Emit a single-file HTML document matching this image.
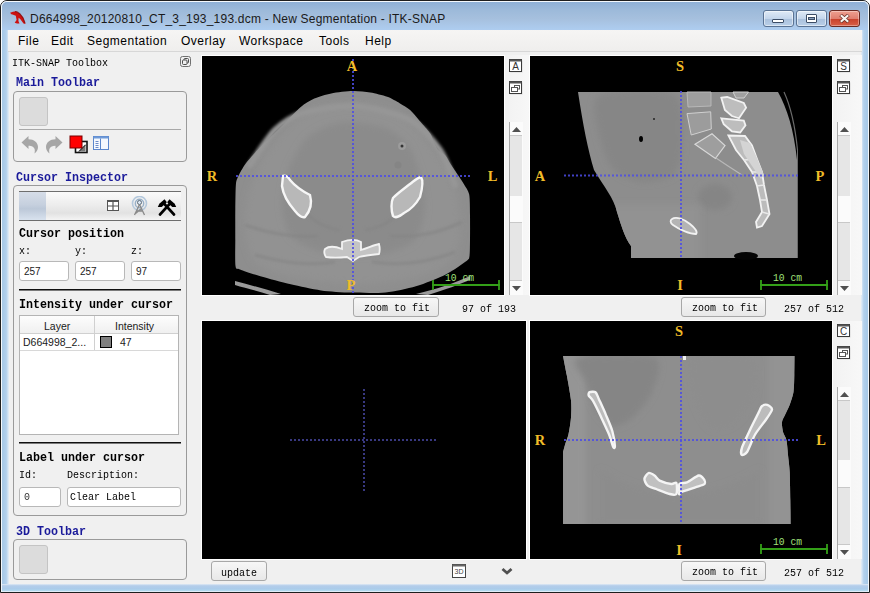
<!DOCTYPE html>
<html><head><meta charset="utf-8">
<style>
*{box-sizing:border-box;margin:0;padding:0}
html,body{width:870px;height:593px;overflow:hidden;background:#fff;position:relative;font-family:"Liberation Sans",sans-serif}
.a{position:absolute}
.t{position:absolute;white-space:nowrap;line-height:1}
.mono{font-family:"Liberation Mono",monospace;font-size:11px;transform-origin:0 0;transform:scaleX(0.9091)}
.bmono{font-family:"Liberation Mono",monospace;font-weight:bold;font-size:12px;transform-origin:0 0;transform:scaleX(0.9722)}
.blue{color:#1a1a9a}
.gb{position:absolute;border:1px solid #9a9a9a;border-radius:4px}
.sb{position:absolute;background:#fff;border:1px solid #b8b8b8;border-radius:3px}
.btn{position:absolute;border:1px solid #a8a8a8;border-radius:3px;background:linear-gradient(#f7f7f7,#e8e8e8)}
.view{position:absolute;background:#000;overflow:hidden}
.lab{position:absolute;color:#f0b020;font-family:"Liberation Serif",serif;font-weight:bold;font-size:13px;line-height:1}
</style></head><body>
<!-- window frame -->
<div class="a" style="left:0;top:0;width:870px;height:593px;border:1px solid #1e1e1e;border-radius:7px 7px 0 0;background:#b4cbe6"></div>
<div class="a" style="left:1px;top:1px;width:868px;height:591px;border:1px solid #f4f8fc;border-radius:6px 6px 0 0;border-bottom-color:#e0ecf8"></div>
<div class="a" style="left:2px;top:2px;width:866px;height:28px;border-radius:5px 5px 0 0;background:linear-gradient(#8fb0d6 0%,#9dbada 30%,#a6c0de 60%,#aecdf0 100%)"></div>
<div class="a" style="left:2px;top:30px;width:7px;height:554px;background:linear-gradient(90deg,#a6c8e6 0%,#b2d0ec 60%,#e6eef6 100%)"></div>
<div class="a" style="left:861px;top:30px;width:7px;height:554px;background:linear-gradient(270deg,#a6c8e6 0%,#b2d0ec 60%,#e6eef6 100%)"></div>
<div class="a" style="left:2px;top:584px;width:866px;height:7px;background:linear-gradient(#e0eaf4 0%,#b4cdea 25%,#aacbea 70%,#b4dcf0 100%)"></div>

<!-- title -->
<svg class="a" style="left:8px;top:9px" width="20" height="17" viewBox="8 9 20 17">
<path d="M10.1,12.8 L13,11.8 L16,11.2 L19.7,13.4 L23.1,17.2 L25.6,24 L23.5,23.5 L20.2,18.9 L18.6,17.8 L18.4,21 L19.5,23.6 L17,23.4 L14.7,22.7 L16.6,20 L15.8,15.8 L12.5,14.5 L11.3,14.3 Z" fill="#cc1111"/>
<path d="M15,11.6 L17.5,12 L20,14 L23,18 L25,23" stroke="#7a0a0a" stroke-width="1.2" fill="none" opacity=".7"/>
</svg>
<div class="t" style="left:30px;top:13px;font-size:12px;color:#1a1a1a;letter-spacing:0.21px">D664998_20120810_CT_3_193_193.dcm - New Segmentation - ITK-SNAP</div>

<!-- caption buttons -->
<div class="a" style="left:763px;top:10px;width:31px;height:17px;border:1px solid #5a7394;border-radius:3px;background:linear-gradient(#dfeaf6 0%,#c4d6ec 50%,#a9c0dc 51%,#b9cfe8 100%);box-shadow:inset 0 0 0 1px rgba(255,255,255,.5)"></div>
<div class="a" style="left:772px;top:19px;width:12px;height:4px;background:#fff;border:1px solid #3c4d66;border-radius:1px"></div>
<div class="a" style="left:796px;top:10px;width:31px;height:17px;border:1px solid #5a7394;border-radius:3px;background:linear-gradient(#dfeaf6 0%,#c4d6ec 50%,#a9c0dc 51%,#b9cfe8 100%);box-shadow:inset 0 0 0 1px rgba(255,255,255,.5)"></div>
<div class="a" style="left:806px;top:14px;width:11px;height:9px;background:#fff;border:1px solid #3c4d66;border-radius:1px"></div>
<div class="a" style="left:808px;top:17px;width:7px;height:3px;background:#8aa0bc;border:1px solid #3c4d66"></div>
<div class="a" style="left:829px;top:10px;width:31px;height:17px;border:1px solid #6a2a22;border-radius:3px;background:linear-gradient(#eea090 0%,#e08070 50%,#c8402a 51%,#d86048 100%);box-shadow:inset 0 0 0 1px rgba(255,255,255,.35)"></div>
<svg class="a" style="left:839px;top:14px" width="11" height="9" viewBox="0 0 11 9">
<path d="M1.5,1 L9.5,8 M9.5,1 L1.5,8" stroke="#6a3028" stroke-width="3.6" stroke-linecap="butt"/>
<path d="M1.8,1.2 L9.2,7.8 M9.2,1.2 L1.8,7.8" stroke="#f8f4f0" stroke-width="2.2"/>
</svg>

<!-- menubar -->
<div class="a" style="left:8px;top:30px;width:854px;height:22px;background:linear-gradient(#f6f5f4,#efeeed);border-bottom:1px solid #d7d7d7"></div>
<div class="t" style="left:18px;top:35px;font-size:12px;color:#000;letter-spacing:0.5px">File</div>
<div class="t" style="left:51px;top:35px;font-size:12px;color:#000;letter-spacing:0.5px">Edit</div>
<div class="t" style="left:87px;top:35px;font-size:12px;color:#000;letter-spacing:0.5px">Segmentation</div>
<div class="t" style="left:181px;top:35px;font-size:12px;color:#000;letter-spacing:0.5px">Overlay</div>
<div class="t" style="left:239px;top:35px;font-size:12px;color:#000;letter-spacing:0.5px">Workspace</div>
<div class="t" style="left:319px;top:35px;font-size:12px;color:#000;letter-spacing:0.5px">Tools</div>
<div class="t" style="left:365px;top:35px;font-size:12px;color:#000;letter-spacing:0.5px">Help</div>

<!-- content bg -->
<div class="a" style="left:9px;top:52px;width:852px;height:532px;background:#f0f0f0"></div>

<!-- LEFT PANEL -->
<div class="t mono" style="left:12px;top:58px;color:#000">ITK-SNAP Toolbox</div>
<svg class="a" style="left:180px;top:56px" width="11" height="11" viewBox="0 0 11 11">
<rect x="0.5" y="0.5" width="10" height="10" rx="2" fill="none" stroke="#707070"/>
<rect x="4" y="2.5" width="4.5" height="4.5" rx="1" fill="#f0f0f0" stroke="#505050"/>
<rect x="2.5" y="4" width="4.5" height="4.5" rx="1" fill="#f0f0f0" stroke="#505050"/>
</svg>
<div class="t bmono blue" style="left:16px;top:77px">Main Toolbar</div>
<div class="gb" style="left:13px;top:91px;width:174px;height:71px"></div>
<div class="a" style="left:19px;top:97px;width:29px;height:29px;border:1px solid #c4c4c4;border-radius:3px;background:#dcdcdc"></div>
<div class="a" style="left:19px;top:129px;width:162px;height:1px;background:#a8a8a8"></div>

<!-- CURSOR INSPECTOR -->
<div class="t bmono blue" style="left:16px;top:172px">Cursor Inspector</div>
<div class="gb" style="left:13px;top:185px;width:174px;height:331px"></div>
<div class="a" style="left:19px;top:191px;width:162px;height:30px;border-top:1px solid #6e6e6e;border-bottom:1px solid #6e6e6e;background:linear-gradient(#fafafa 0%,#ededed 45%,#e2e2e2 75%,#f4f4f4 100%)"></div>
<div class="a" style="left:19px;top:192px;width:27px;height:28px;background:linear-gradient(#d6dde8 0%,#c6d0de 45%,#bcc8d8 60%,#d8e2ee 100%)"></div>
<div class="t bmono" style="left:19px;top:228px;color:#000">Cursor position</div>
<div class="t mono" style="left:19px;top:246px;color:#000">x:</div>
<div class="t mono" style="left:75px;top:246px;color:#000">y:</div>
<div class="t mono" style="left:131px;top:246px;color:#000">z:</div>
<div class="sb" style="left:19px;top:261px;width:50px;height:20px"></div>
<div class="sb" style="left:75px;top:261px;width:50px;height:20px"></div>
<div class="sb" style="left:131px;top:261px;width:50px;height:20px"></div>
<div class="t" style="left:24px;top:267px;font-size:10px;color:#1a1a1a">257</div>
<div class="t" style="left:80px;top:267px;font-size:10px;color:#1a1a1a">257</div>
<div class="t" style="left:136px;top:267px;font-size:10px;color:#1a1a1a">97</div>
<div class="a" style="left:19px;top:289px;width:162px;height:2px;background:linear-gradient(#101010 50%,#7a7a7a 50%)"></div>
<div class="t bmono" style="left:19px;top:299px;color:#000">Intensity under cursor</div>
<!-- table -->
<div class="a" style="left:19px;top:315px;width:160px;height:120px;background:#fff;border:1px solid #b4b4b4"></div>
<div class="a" style="left:20px;top:316px;width:158px;height:18px;background:linear-gradient(#fdfdfd,#f0f0f0);border-bottom:1px solid #d0d0d0"></div>
<div class="a" style="left:94px;top:316px;width:1px;height:34px;background:#d0d0d0"></div>
<div class="a" style="left:20px;top:350px;width:158px;height:1px;background:#d8d8d8"></div>
<div class="t" style="left:44px;top:321px;font-size:10.5px;color:#1a1a1a">Layer</div>
<div class="t" style="left:115px;top:321px;font-size:10.5px;color:#1a1a1a">Intensity</div>
<div class="t" style="left:23px;top:337px;font-size:10.5px;color:#1a1a1a">D664998_2...</div>
<div class="a" style="left:100px;top:336px;width:12px;height:12px;border:1px solid #000;background:#808080"></div>
<div class="t" style="left:120px;top:337px;font-size:10.5px;color:#1a1a1a">47</div>
<div class="a" style="left:19px;top:442px;width:162px;height:2px;background:linear-gradient(#101010 50%,#7a7a7a 50%)"></div>
<div class="t bmono" style="left:19px;top:452px;color:#000">Label under cursor</div>
<div class="t mono" style="left:19px;top:470px;color:#000">Id:</div>
<div class="t mono" style="left:67px;top:470px;color:#000">Description:</div>
<div class="sb" style="left:19px;top:487px;width:42px;height:20px"></div>
<div class="sb" style="left:67px;top:487px;width:114px;height:20px"></div>
<div class="t mono" style="left:24px;top:492px;color:#333">0</div>
<div class="t mono" style="left:70px;top:492px;color:#000">Clear Label</div>

<!-- 3D TOOLBAR -->
<div class="t bmono blue" style="left:16px;top:526px">3D Toolbar</div>
<div class="gb" style="left:13px;top:539px;width:174px;height:41px"></div>
<div class="a" style="left:19px;top:545px;width:29px;height:29px;border:1px solid #c4c4c4;border-radius:3px;background:#dcdcdc"></div>

<!-- VIEWS -->
<div class="a" style="left:201px;top:55px;width:304px;height:241px;background:#fff"></div>
<div class="a" style="left:529px;top:55px;width:304px;height:241px;background:#fff"></div>
<div class="a" style="left:201px;top:320px;width:326px;height:240px;background:#fff"></div>
<div class="a" style="left:529px;top:320px;width:304px;height:240px;background:#fff"></div>

<svg width="0" height="0" style="position:absolute"><defs><filter id="soft" x="-20%" y="-20%" width="140%" height="140%"><feGaussianBlur stdDeviation="3"/></filter><filter id="bsoft" x="-20%" y="-20%" width="140%" height="140%"><feGaussianBlur stdDeviation="0.5"/></filter><filter id="msoft" x="-20%" y="-20%" width="140%" height="140%"><feGaussianBlur stdDeviation="1.5"/></filter></defs></svg>
<svg class="a" style="left:202px;top:56px" width="302" height="239" viewBox="202 56 302 239">
<rect x="202" y="56" width="302" height="239" fill="#000"/>
<path d="M235,281 C250,285 265,289 281,294 L270,295 C258,291 245,288 235,285 Z" fill="#9a9a9a"/>
<path d="M470,276 C455,283 437,289 416,294 L428,295 C445,290 460,284 470,280 Z" fill="#9a9a9a"/>
<path d="M353.0,91.0 C358.2,90.9 365.7,91.8 370.3,92.6 C374.9,93.4 383.2,95.4 387.2,96.8 C391.2,98.2 396.9,101.6 400.0,103.4 C403.1,105.2 407.2,107.4 410.1,110.1 C413.0,112.8 419.2,120.4 421.9,123.6 C424.6,126.8 428.8,131.3 430.4,133.8 C432.0,136.3 432.7,140.0 433.8,142.2 C434.9,144.4 437.2,148.8 438.8,150.6 C440.4,152.4 444.0,153.9 445.6,155.7 C447.2,157.5 449.0,161.6 450.6,164.1 C452.2,166.6 455.6,171.6 457.4,174.3 C459.2,177.0 462.5,181.7 464.1,184.4 C465.7,187.1 468.4,190.4 469.2,194.5 C470.0,198.6 469.9,208.9 470.0,215.0 C470.1,221.1 470.1,234.5 470.0,240.0 C469.9,245.5 470.0,253.2 469.5,256.0 C469.0,258.8 469.6,258.6 466.5,261.0 C463.4,263.4 452.9,270.8 446.2,274.2 C439.5,277.6 424.0,283.9 415.9,286.3 C407.8,288.7 394.1,291.6 385.5,292.4 C376.9,293.2 360.1,292.9 351.5,292.6 C342.9,292.3 329.1,291.5 321.0,290.4 C312.9,289.3 298.8,286.2 290.7,284.3 C282.6,282.4 267.2,278.2 260.4,276.2 C253.6,274.2 243.3,270.9 240.0,269.5 C236.7,268.1 236.1,269.9 235.5,266.0 C234.9,262.1 235.3,247.5 235.3,240.0 C235.3,232.5 235.2,217.4 235.3,210.0 C235.4,202.6 235.5,189.0 235.9,184.5 C236.3,180.0 237.2,178.8 238.4,176.1 C239.6,173.4 242.9,167.4 245.2,164.3 C247.5,161.2 252.4,155.7 255.3,152.5 C258.2,149.3 264.0,143.8 267.1,140.6 C270.2,137.4 276.2,131.5 278.9,128.8 C281.6,126.1 284.4,123.3 287.3,120.4 C290.2,117.5 297.2,109.8 300.8,106.9 C304.4,104.0 310.2,100.3 314.3,98.5 C318.4,96.7 326.0,94.4 331.2,93.4 C336.4,92.4 347.8,91.1 353.0,91.0 Z" fill="#8e8e8e"/>
<path filter="url(#soft)" d="M352.0,104.0 C360.7,104.0 377.3,105.6 385.0,108.0 C392.7,110.4 404.0,117.1 410.0,122.0 C416.0,126.9 424.9,138.6 430.0,145.0 C435.1,151.4 444.3,162.7 448.0,170.0 C451.7,177.3 456.4,191.3 458.0,200.0 C459.6,208.7 461.1,226.7 460.0,235.0 C458.9,243.3 456.0,256.3 450.0,262.0 C444.0,267.7 428.1,275.1 415.0,278.0 C401.9,280.9 368.7,284.3 352.0,284.0 C335.3,283.7 302.9,278.9 290.0,276.0 C277.1,273.1 261.0,268.1 255.0,262.0 C249.0,255.9 245.9,238.9 245.0,230.0 C244.1,221.1 245.7,204.3 248.0,195.0 C250.3,185.7 256.4,169.3 262.0,160.0 C267.6,150.7 282.3,131.9 290.0,125.0 C297.7,118.1 311.7,110.8 320.0,108.0 C328.3,105.2 343.3,104.0 352.0,104.0 Z" fill="#929292"/>
<path filter="url(#soft)" d="M350.0,122.0 C358.0,122.1 377.3,124.9 385.0,128.0 C392.7,131.1 403.3,138.7 408.0,145.0 C412.7,151.3 417.7,166.3 420.0,175.0 C422.3,183.7 425.7,201.3 425.0,210.0 C424.3,218.7 419.7,234.4 415.0,240.0 C410.3,245.6 398.4,250.0 390.0,252.0 C381.6,254.0 362.0,255.3 352.0,255.0 C342.0,254.7 323.3,252.7 315.0,250.0 C306.7,247.3 294.4,241.0 290.0,235.0 C285.6,229.0 282.3,213.7 282.0,205.0 C281.7,196.3 284.9,178.7 288.0,170.0 C291.1,161.3 300.1,145.7 305.0,140.0 C309.9,134.3 319.0,129.4 325.0,127.0 C331.0,124.6 342.0,121.9 350.0,122.0 Z" fill="#8b8b8b"/>
<path filter="url(#msoft)" d="M250.0,165.0 C253.3,160.3 267.9,136.9 275.0,130.0 C282.1,123.1 292.3,116.2 303.0,113.0 C313.7,109.8 340.7,105.1 355.0,106.0 C369.3,106.9 398.7,114.1 410.0,120.0 C421.3,125.9 434.0,141.3 440.0,150.0 C446.0,158.7 453.0,180.3 455.0,185.0 " fill="none" stroke="#969696" stroke-width="6" stroke-linecap="round"/><path filter="url(#msoft)" d="M245,225 C265,232 290,238 318,236 M390,236 C420,238 440,232 462,222 M255,255 C280,262 310,266 335,262 M372,262 C400,266 430,262 455,252 M300,205 C310,220 325,228 340,230 M405,205 C395,220 380,228 365,230" fill="none" stroke="#848484" stroke-width="2"/>
<path d="M283,176 C286,175 289,178 290,180 C295,186 304,192 310,195 C312,202 311,210 305,217 C302,218 299,216 295,211 C288,203 283,194 282,186 Z" fill="#b8b8b8" stroke="#f6f6f6" stroke-width="2.4"/>
<path d="M421,177 C423,180 423,186 420,197 C416,204 410,210 404,213 C400,216 396,219 393,216 C391,210 391,202 393,198 C398,193 405,188 410,184 C414,181 417,178 421,177 Z" fill="#b8b8b8" stroke="#f6f6f6" stroke-width="2.4"/>
<path d="M325,249 C330,245 337,247 342,249 L342,242 C350,239 356,239 361,242 L361,250 C368,248 374,245 379,244 C380,248 380,251 379,254 C370,255 363,256 359,257 L353,261 L347,257 C338,258 332,258 326,257 C324,254 324,251 325,249 Z" fill="#c4c4c4" stroke="#f2f2f2" stroke-width="1.8"/>
<circle cx="402" cy="146" r="4" fill="#9c9c9c"/><circle cx="402" cy="146" r="1.5" fill="#333"/><circle cx="398" cy="165" r="3.5" fill="#858585"/>
<g stroke="#4c4ce6" stroke-opacity="0.85" stroke-width="2" stroke-dasharray="2 2" fill="none">
<path d="M353,59 V294"/>
<path d="M236,176 H470"/>
</g>
<g fill="#f0bc28" font-family="Liberation Serif" font-weight="bold" font-size="14.5">
<text x="352" y="71" text-anchor="middle">A</text>
<text x="212" y="181" text-anchor="middle">R</text>
<text x="492.5" y="181" text-anchor="middle">L</text>
<text x="351" y="290" text-anchor="middle">P</text>
</g>
<g stroke="#34a018" stroke-width="1.8" fill="none"><path d="M432,285 H500 M433,280 V290 M499,280 V290"/></g>
<text x="445" y="281" fill="#a0e47a" font-family="Liberation Mono" font-size="11" textLength="29" lengthAdjust="spacingAndGlyphs">10 cm</text>
</svg>

<svg class="a" style="left:530px;top:56px" width="302" height="239" viewBox="530 56 302 239">
<rect x="530" y="56" width="302" height="239" fill="#000"/>
<path d="M578,92 L778,92 C787,108 794,130 797,160 L797,258 L631,258 L631,246 C625,238 621,225 617,212 C614,198 604,187 594,170 C588,150 583,125 578,92 Z" fill="#8d8d8d"/>
<clipPath id="csag"><path d="M578,92 L778,92 C787,108 794,130 797,160 L797,258 L631,258 L631,246 C625,238 621,225 617,212 C614,198 604,187 594,170 C588,150 583,125 578,92 Z"/></clipPath><g clip-path="url(#csag)"><path filter="url(#soft)" d="M600.0,95.0 C610.3,90.3 664.1,87.7 675.0,95.0 C685.9,102.3 682.4,139.2 682.0,150.0 C681.6,160.8 677.6,171.7 672.0,176.0 C666.4,180.3 648.0,183.1 640.0,182.0 C632.0,180.9 617.6,174.9 612.0,168.0 C606.4,161.1 599.6,139.7 598.0,130.0 C596.4,120.3 589.7,99.7 600.0,95.0 Z" fill="#868686"/><ellipse filter="url(#soft)" cx="715" cy="197" rx="17" ry="13" fill="#858585"/><rect filter="url(#soft)" x="610" y="205" width="90" height="60" fill="#929292"/>
</g>
<path d="M687,92 L711,92 L711,106 L688,107 Z" fill="#9e9e9e" stroke="#b8b8b8" stroke-width="1"/>
<path d="M687,113.6 L710.7,111.8 L711.3,129 L691.2,135 Z" fill="#9c9c9c" stroke="#d0d0d0" stroke-width="1"/>
<path d="M695,144.3 L712,133.7 L725,145.5 L715.4,158.5 Z" fill="#9e9e9e" stroke="#d8d8d8" stroke-width="1.2"/>
<path d="M716,158 L728,166 L742,175" stroke="#b8b8b8" stroke-width="1.2" fill="none"/>
<path d="M721.3,97.7 L727.2,97 L743.8,103 L746.1,107.7 L739,118.3 L731.9,116 L724.9,110 Z" fill="#bdbdbd" stroke="#f2f2f2" stroke-width="1.8"/>
<path d="M733,92 L748.5,92 L744,98 L736,98 Z" fill="#a0a0a0" stroke="#d0d0d0" stroke-width="1"/>
<path d="M721.3,118.3 L743.8,120.7 L745.5,125.4 L740.2,132.5 L731.9,131.3 L723.7,124.2 Z" fill="#bdbdbd" stroke="#f2f2f2" stroke-width="1.8"/>
<path d="M728.4,135.5 L745,136 L752,145.5 L757,159 L762,172 L764,185 L767,200 L769.5,214 L762,226 L757,227.5 L756,222 L762,212 L760,200 L757,186 L752,172 L744,160 L736,150 Z" fill="#bcbcbc" stroke="#f2f2f2" stroke-width="1.8"/>
<path d="M744,160 L757,159 M752,172 L762,172 M757,186 L764,185 M760,200 L767,200 M762,212 L769,214" stroke="#e8e8e8" stroke-width="1.4"/>
<path filter="url(#bsoft)" d="M740,140 L750,143 L757,158 L764,175 L761,179 L752,166 L744,154 Z" fill="#d4d4d4"/>
<path d="M672,219 C676,216 684,219 690,224 C695,228 698,232 696,234 C690,234 680,230 673,225 C670,223 670,220 672,219 Z" fill="#b4b4b4" stroke="#f2f2f2" stroke-width="1.8"/>
<path d="M784,92 C790,105 795,125 797.5,150" stroke="#6a6a6a" stroke-width="1.2" fill="none"/><rect x="797" y="150" width="1" height="108" fill="#6a6a6a"/>
<ellipse cx="746" cy="256" rx="12" ry="4" fill="#050505"/>
<ellipse cx="641" cy="139" rx="2" ry="3" fill="#000"/>
<circle cx="654" cy="119" r="1" fill="#222"/>
<g stroke="#4c4ce6" stroke-opacity="0.85" stroke-width="2" stroke-dasharray="2 2" fill="none">
<path d="M681,91 V259"/>
<path d="M564,175.5 H798"/>
</g>
<g fill="#f0bc28" font-family="Liberation Serif" font-weight="bold" font-size="14.5">
<text x="680" y="71" text-anchor="middle">S</text>
<text x="540" y="181" text-anchor="middle">A</text>
<text x="820" y="181" text-anchor="middle">P</text>
<text x="680" y="290" text-anchor="middle">I</text>
</g>
<g stroke="#34a018" stroke-width="1.8" fill="none"><path d="M760,285 H828 M761,280 V290 M827,280 V290"/></g>
<text x="773" y="281" fill="#a0e47a" font-family="Liberation Mono" font-size="11" textLength="29" lengthAdjust="spacingAndGlyphs">10 cm</text>
</svg>

<svg class="a" style="left:202px;top:321px" width="324" height="238" viewBox="202 321 324 238">
<rect x="202" y="321" width="324" height="238" fill="#000"/>
<g stroke="#383880" stroke-width="2" stroke-dasharray="2 2" fill="none">
<path d="M364,389 V492"/>
<path d="M290,440 H437"/>
</g>
</svg>

<svg class="a" style="left:530px;top:321px" width="302" height="238" viewBox="530 321 302 238">
<rect x="530" y="321" width="302" height="238" fill="#000"/>
<path d="M563,356 L794.5,356 C794.5,358.5 794.4,370.2 794.3,375.0 C794.2,379.8 794.1,388.1 793.5,392.0 C792.9,395.9 791.1,400.9 790.0,404.0 C788.9,407.1 786.1,412.6 785.0,415.0 C783.9,417.4 782.3,419.7 782.0,422.0 C781.7,424.3 782.4,429.6 783.0,432.0 C783.6,434.4 785.7,436.9 786.4,440.0 C787.1,443.1 787.6,450.7 788.0,455.0 C788.4,459.3 789.4,466.0 789.7,472.0 C790.0,478.0 790.2,493.1 790.3,500.0 C790.4,506.9 790.6,520.8 790.6,524.0  L563,524 L563,452 C563.3,451.0 564.4,446.8 565.1,444.4 C565.8,442.0 567.7,437.9 568.5,434.3 C569.3,430.7 570.7,422.0 571.0,417.5 C571.3,413.0 571.6,406.2 571.0,400.6 C570.4,395.0 567.9,381.2 566.8,375.3 C565.7,369.4 563.5,358.6 563.0,356.0  Z" fill="#8e8e8e"/>
<clipPath id="ccor"><path d="M563,356 L794.5,356 C794.5,358.5 794.4,370.2 794.3,375.0 C794.2,379.8 794.1,388.1 793.5,392.0 C792.9,395.9 791.1,400.9 790.0,404.0 C788.9,407.1 786.1,412.6 785.0,415.0 C783.9,417.4 782.3,419.7 782.0,422.0 C781.7,424.3 782.4,429.6 783.0,432.0 C783.6,434.4 785.7,436.9 786.4,440.0 C787.1,443.1 787.6,450.7 788.0,455.0 C788.4,459.3 789.4,466.0 789.7,472.0 C790.0,478.0 790.2,493.1 790.3,500.0 C790.4,506.9 790.6,520.8 790.6,524.0  L563,524 L563,452 C563.3,451.0 564.4,446.8 565.1,444.4 C565.8,442.0 567.7,437.9 568.5,434.3 C569.3,430.7 570.7,422.0 571.0,417.5 C571.3,413.0 571.6,406.2 571.0,400.6 C570.4,395.0 567.9,381.2 566.8,375.3 C565.7,369.4 563.5,358.6 563.0,356.0  Z"/></clipPath><g clip-path="url(#ccor)"><rect x="560" y="350" width="26" height="180" fill="#959595" filter="url(#soft)"/><rect x="768" y="350" width="30" height="180" fill="#939393" filter="url(#soft)"/><path filter="url(#soft)" d="M578.0,358.0 C587.2,354.8 645.1,353.5 655.0,358.0 C664.9,362.5 655.1,384.0 652.0,392.0 C648.9,400.0 637.3,413.5 632.0,418.0 C626.7,422.5 616.8,427.1 612.0,426.0 C607.2,424.9 599.5,415.9 596.0,410.0 C592.5,404.1 588.4,388.9 586.0,382.0 C583.6,375.1 568.8,361.2 578.0,358.0 Z" fill="#858585"/><path filter="url(#soft)" d="M692.0,358.0 C699.5,352.1 743.7,353.1 752.0,358.0 C760.3,362.9 756.3,386.5 754.0,395.0 C751.7,403.5 740.6,417.6 735.0,422.0 C729.4,426.4 717.2,430.7 712.0,428.0 C706.8,425.3 698.7,411.3 696.0,402.0 C693.3,392.7 684.5,363.9 692.0,358.0 Z" fill="#8d8d8d"/><path filter="url(#soft)" d="M600,470 C650,500 700,505 760,470 L760,524 L600,524 Z" fill="#8c8c8c"/></g>
<path d="M589.6,392.2 C590.5,391.8 594.3,391.3 595.5,392.2 C596.7,393.1 597.5,396.0 598.8,398.9 C600.1,401.8 603.8,409.8 605.6,414.1 C607.4,418.4 611.1,426.7 612.3,431.0 C613.5,435.3 614.8,444.0 614.9,446.1 C615.0,448.2 614.0,448.6 613.2,447.0 C612.4,445.4 610.7,438.5 609.0,434.3 C607.3,430.1 602.6,420.3 600.5,415.8 C598.4,411.3 594.5,403.3 592.9,400.6 C591.3,397.9 589.1,396.6 588.7,395.5 C588.3,394.4 588.7,392.6 589.6,392.2 Z" fill="#bcbcbc" stroke="#f4f4f4" stroke-width="2.4"/>
<path d="M767.2,404.8 C768.6,405.2 772.2,407.5 772.0,409.5 C771.8,411.5 768.2,416.4 765.9,419.7 C763.6,423.0 757.6,430.2 755.1,434.5 C752.6,438.8 748.8,449.3 747.0,452.0 C745.2,454.7 742.2,455.5 741.6,454.8 C741.0,454.1 741.0,450.3 742.3,446.7 C743.6,443.1 748.8,432.5 751.0,427.8 C753.2,423.1 757.7,414.5 759.1,411.6 C760.5,408.7 760.7,407.1 761.8,406.2 C762.9,405.3 765.8,404.4 767.2,404.8 Z" fill="#bcbcbc" stroke="#f4f4f4" stroke-width="2.4"/>
<path d="M644.4,478.9 C644.5,477.2 647.3,473.5 648.6,473.0 C649.9,472.5 653.0,474.5 654.5,475.5 C656.0,476.5 657.3,479.5 659.6,480.6 C661.9,481.7 669.2,483.7 671.4,484.0 C673.6,484.3 675.7,481.7 676.4,483.0 C677.1,484.3 677.3,492.5 676.4,494.0 C675.5,495.5 672.4,494.7 669.7,494.0 C667.0,493.3 659.1,490.1 656.2,489.0 C653.3,487.9 649.3,486.9 647.7,485.6 C646.1,484.3 644.3,480.6 644.4,478.9 Z" fill="#c0c0c0" stroke="#f4f4f4" stroke-width="2.4"/>
<path d="M679.5,484.0 C680.5,482.4 684.3,483.4 686.9,482.3 C689.5,481.2 696.5,476.0 698.7,475.5 C700.9,475.0 702.9,477.8 703.7,478.9 C704.5,480.0 705.7,482.9 704.6,484.0 C703.5,485.1 698.6,486.2 695.3,487.3 C692.0,488.4 682.2,491.5 680.1,492.4 C678.0,493.3 679.6,495.1 679.5,494.0 C679.4,492.9 678.5,485.6 679.5,484.0 Z" fill="#c0c0c0" stroke="#f4f4f4" stroke-width="2.4"/>
<rect x="683" y="356" width="3" height="4" fill="#eee"/>
<g stroke="#4c4ce6" stroke-opacity="0.85" stroke-width="2" stroke-dasharray="2 2" fill="none">
<path d="M681,356 V524"/>
<path d="M564,440 H798"/>
</g>
<g fill="#f0bc28" font-family="Liberation Serif" font-weight="bold" font-size="14.5">
<text x="679" y="336" text-anchor="middle">S</text>
<text x="540" y="445" text-anchor="middle">R</text>
<text x="821" y="445" text-anchor="middle">L</text>
<text x="679" y="555" text-anchor="middle">I</text>
</g>
<g stroke="#34a018" stroke-width="1.8" fill="none"><path d="M760,549 H828 M761,544 V554 M827,544 V554"/></g>
<text x="773" y="545" fill="#a0e47a" font-family="Liberation Mono" font-size="11" textLength="29" lengthAdjust="spacingAndGlyphs">10 cm</text>
</svg>


<!-- sidebars -->
<div class="a" style="left:505px;top:55px;width:24px;height:240px;background:linear-gradient(90deg,#f2f2f2,#f7f7f7)"></div>
<div class="a" style="left:833px;top:55px;width:29px;height:240px;background:linear-gradient(90deg,#f2f2f2,#f8f8f8)"></div>
<div class="a" style="left:833px;top:321px;width:29px;height:238px;background:linear-gradient(90deg,#f2f2f2,#f8f8f8)"></div>
<svg class="a" style="left:509px;top:59px" width="15" height="15" viewBox="0 0 15 15">
<rect x="1.5" y="1.5" width="12" height="12" fill="#bbb" opacity=".5"/>
<rect x="0.5" y="0.5" width="12" height="12" fill="#fff" stroke="#3a3a3a"/>
<rect x="0.5" y="0.5" width="12" height="2" fill="#555"/>
<text x="6.5" y="10.9" text-anchor="middle" font-family="Liberation Sans" font-size="10" fill="#333">A</text></svg>
<svg class="a" style="left:509px;top:81px" width="15" height="15" viewBox="0 0 15 15">
<rect x="1.5" y="1.5" width="12" height="12" fill="#bbb" opacity=".5"/>
<rect x="0.5" y="0.5" width="12" height="12" fill="#fff" stroke="#3a3a3a"/>
<rect x="0.5" y="0.5" width="12" height="2" fill="#555"/>
<rect x="5.5" y="4.5" width="5" height="3.5" fill="#fff" stroke="#555" stroke-width="1"/><rect x="2.5" y="6.5" width="6" height="4" fill="#fff" stroke="#555" stroke-width="1"/></svg>
<div class="a" style="left:509px;top:122px;width:14px;height:173px;background:#fbfbfb;border-left:1px solid #a8a8a8"></div>
<div class="a" style="left:510px;top:135px;width:12px;height:61px;background:#e6e6e6;border-top:1px solid #c8c8c8"></div>
<div class="a" style="left:510px;top:222px;width:12px;height:59px;background:#e6e6e6;border-top:1px solid #c8c8c8;border-bottom:1px solid #c8c8c8"></div>
<svg class="a" style="left:512px;top:127px" width="9" height="5"><path d="M0,5 L4.5,0 L9,5 Z" fill="#505050"/></svg>
<svg class="a" style="left:512px;top:286px" width="9" height="5"><path d="M0,0 L4.5,5 L9,0 Z" fill="#505050"/></svg>
<svg class="a" style="left:837px;top:59px" width="15" height="15" viewBox="0 0 15 15">
<rect x="1.5" y="1.5" width="12" height="12" fill="#bbb" opacity=".5"/>
<rect x="0.5" y="0.5" width="12" height="12" fill="#fff" stroke="#3a3a3a"/>
<rect x="0.5" y="0.5" width="12" height="2" fill="#555"/>
<text x="6.5" y="10.9" text-anchor="middle" font-family="Liberation Sans" font-size="10" fill="#333">S</text></svg>
<svg class="a" style="left:837px;top:81px" width="15" height="15" viewBox="0 0 15 15">
<rect x="1.5" y="1.5" width="12" height="12" fill="#bbb" opacity=".5"/>
<rect x="0.5" y="0.5" width="12" height="12" fill="#fff" stroke="#3a3a3a"/>
<rect x="0.5" y="0.5" width="12" height="2" fill="#555"/>
<rect x="5.5" y="4.5" width="5" height="3.5" fill="#fff" stroke="#555" stroke-width="1"/><rect x="2.5" y="6.5" width="6" height="4" fill="#fff" stroke="#555" stroke-width="1"/></svg>
<div class="a" style="left:837px;top:122px;width:14px;height:173px;background:#fbfbfb;border-left:1px solid #a8a8a8"></div>
<div class="a" style="left:838px;top:135px;width:12px;height:61px;background:#e6e6e6;border-top:1px solid #c8c8c8"></div>
<div class="a" style="left:838px;top:222px;width:12px;height:59px;background:#e6e6e6;border-top:1px solid #c8c8c8;border-bottom:1px solid #c8c8c8"></div>
<svg class="a" style="left:840px;top:127px" width="9" height="5"><path d="M0,5 L4.5,0 L9,5 Z" fill="#505050"/></svg>
<svg class="a" style="left:840px;top:286px" width="9" height="5"><path d="M0,0 L4.5,5 L9,0 Z" fill="#505050"/></svg>
<svg class="a" style="left:837px;top:324px" width="15" height="15" viewBox="0 0 15 15">
<rect x="1.5" y="1.5" width="12" height="12" fill="#bbb" opacity=".5"/>
<rect x="0.5" y="0.5" width="12" height="12" fill="#fff" stroke="#3a3a3a"/>
<rect x="0.5" y="0.5" width="12" height="2" fill="#555"/>
<text x="6.5" y="10.9" text-anchor="middle" font-family="Liberation Sans" font-size="10" fill="#333">C</text></svg>
<svg class="a" style="left:837px;top:346px" width="15" height="15" viewBox="0 0 15 15">
<rect x="1.5" y="1.5" width="12" height="12" fill="#bbb" opacity=".5"/>
<rect x="0.5" y="0.5" width="12" height="12" fill="#fff" stroke="#3a3a3a"/>
<rect x="0.5" y="0.5" width="12" height="2" fill="#555"/>
<rect x="5.5" y="4.5" width="5" height="3.5" fill="#fff" stroke="#555" stroke-width="1"/><rect x="2.5" y="6.5" width="6" height="4" fill="#fff" stroke="#555" stroke-width="1"/></svg>
<div class="a" style="left:837px;top:387px;width:14px;height:172px;background:#fbfbfb;border-left:1px solid #a8a8a8"></div>
<div class="a" style="left:838px;top:400px;width:12px;height:60px;background:#e6e6e6;border-top:1px solid #c8c8c8"></div>
<div class="a" style="left:838px;top:487px;width:12px;height:58px;background:#e6e6e6;border-top:1px solid #c8c8c8;border-bottom:1px solid #c8c8c8"></div>
<svg class="a" style="left:840px;top:392px" width="9" height="5"><path d="M0,5 L4.5,0 L9,5 Z" fill="#505050"/></svg>
<svg class="a" style="left:840px;top:550px" width="9" height="5"><path d="M0,0 L4.5,5 L9,0 Z" fill="#505050"/></svg>

<!-- main toolbar icons -->
<svg class="a" style="left:20px;top:134px" width="20" height="20" viewBox="0 0 20 20">
<path d="M1.5,8.5 L8.5,2 L8.5,5.2 C14,5.2 18,8.5 18,13 C18,16 16.5,18 14.5,19.5 C15.2,16.5 15,14.2 12.8,12.8 C11.6,12.1 10,11.8 8.5,11.8 L8.5,15 Z" fill="#a6a6a6"/>
</svg>
<svg class="a" style="left:44px;top:134px" width="20" height="20" viewBox="0 0 20 20">
<path d="M18.5,8.5 L11.5,2 L11.5,5.2 C6,5.2 2,8.5 2,13 C2,16 3.5,18 5.5,19.5 C4.8,16.5 5,14.2 7.2,12.8 C8.4,12.1 10,11.8 11.5,11.8 L11.5,15 Z" fill="#a6a6a6"/>
</svg>
<svg class="a" style="left:69px;top:135px" width="20" height="19" viewBox="0 0 20 19">
<rect x="6.5" y="6.5" width="11.5" height="11" fill="#fff" stroke="#111" stroke-width="1.6"/>
<path d="M9,16.5 L16.5,9 L16.5,16.5 Z" fill="#777"/>
<path d="M10,16.5 L16.5,10" stroke="#222" stroke-width="1"/>
<rect x="1" y="1" width="12" height="12" fill="#f00" stroke="#700" stroke-width="1"/>
</svg>
<svg class="a" style="left:93px;top:136px" width="17" height="15" viewBox="0 0 17 15">
<rect x="0.5" y="0.5" width="15" height="13" fill="#f4f8fe" stroke="#5a86cc"/>
<rect x="0.5" y="0.5" width="15" height="2" fill="#6e9ad8"/>
<path d="M7.5,2.5 V13.5" stroke="#5a86cc"/>
<path d="M2.5,5.5 H5.5 M2.5,7.5 H5.5 M2.5,9.5 H5.5 M2.5,11.5 H5.5" stroke="#6a8ac8"/>
</svg>
<!-- inspector strip icons -->
<svg class="a" style="left:107px;top:200px" width="12" height="11" viewBox="0 0 12 11">
<rect x="0.5" y="0.5" width="11" height="10" fill="#fff" stroke="#555"/>
<rect x="0" y="0" width="12" height="2" fill="#555"/>
<path d="M6,2 V11 M0,6 H12" stroke="#555" stroke-width="1.2"/>
</svg>
<svg class="a" style="left:130px;top:196px" width="19" height="20" viewBox="0 0 19 20">
<circle cx="9.5" cy="7.5" r="7" fill="none" stroke="#b4c8dc" stroke-width="1.6"/>
<circle cx="9.5" cy="7.5" r="4.2" fill="none" stroke="#98b0c8" stroke-width="1.4"/>
<circle cx="9.5" cy="6.5" r="2" fill="#dce8f4" stroke="#5a6a7a" stroke-width="1"/>
<path d="M9.5,8.5 L4.5,19 M9.5,8.5 L14.5,19 M6.5,15 L12.5,15 M5.5,17.5 L12,12" stroke="#8a8a8a" stroke-width="1.3" fill="none"/>
</svg>
<svg class="a" style="left:157px;top:198px" width="20" height="18" viewBox="0 0 20 18">
<path d="M3,16.5 L13.5,5 M17,16.5 L6.5,5" stroke="#000" stroke-width="2.6" stroke-linecap="round"/>
<path d="M0.8,9 L2.3,5.8 L7.5,1.2 L9.9,4.3 L4.7,9 Z" fill="#000"/>
<path d="M19.2,9 L17.7,5.8 L12.5,1.2 L10.1,4.3 L15.3,9 Z" fill="#000"/>
</svg>
<svg class="a" style="left:452px;top:564px" width="14" height="14" viewBox="0 0 14 14">
<rect x="0.5" y="0.5" width="13" height="13" fill="#fff" stroke="#444"/>
<rect x="0.5" y="0.5" width="13" height="2" fill="#666"/>
<text x="7" y="10.3" text-anchor="middle" font-family="Liberation Sans" font-size="7.5" fill="#444" textLength="9" lengthAdjust="spacingAndGlyphs">3D</text>
</svg>
<svg class="a" style="left:501px;top:567px" width="12" height="8" viewBox="0 0 12 8">
<path d="M1.5,2 L6,6 L10.5,2" fill="none" stroke="#505050" stroke-width="2.8"/>
</svg>
<!-- view bottom bars -->
<div class="btn" style="left:353px;top:297px;width:86px;height:20px"></div>
<div class="t mono" style="left:364px;top:303px;color:#000">zoom to fit</div>
<div class="t mono" style="left:462px;top:304px;color:#000">97 of 193</div>
<div class="btn" style="left:681px;top:297px;width:85px;height:20px"></div>
<div class="t mono" style="left:692px;top:303px;color:#000">zoom to fit</div>
<div class="t mono" style="left:784px;top:304px;color:#000">257 of 512</div>
<div class="btn" style="left:211px;top:561px;width:56px;height:20px"></div>
<div class="t mono" style="left:221px;top:568px;color:#000">update</div>
<div class="btn" style="left:681px;top:561px;width:85px;height:20px"></div>
<div class="t mono" style="left:692px;top:567px;color:#000">zoom to fit</div>
<div class="t mono" style="left:784px;top:568px;color:#000">257 of 512</div>
</body></html>
